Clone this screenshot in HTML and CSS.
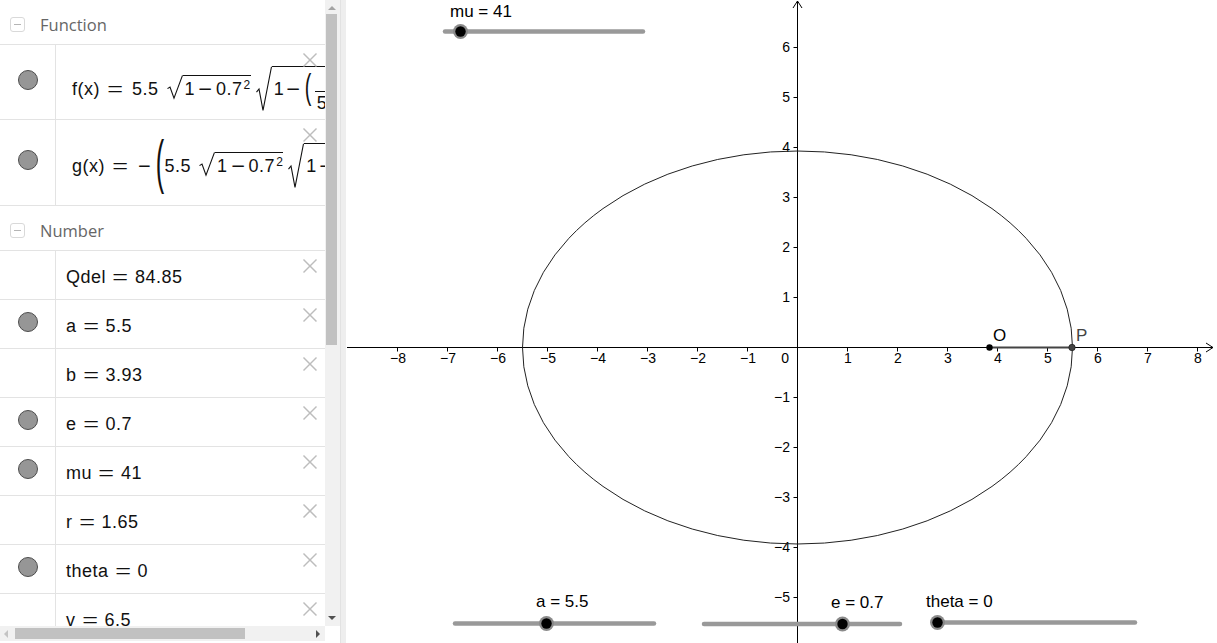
FILE: index.html
```html
<!DOCTYPE html>
<html>
<head>
<meta charset="utf-8">
<title>Ellipse</title>
<link rel="stylesheet" href="styles.css">
</head>
<body>
<div class="app">
  <aside class="algebra">
    <div class="algebra-main">
      <div class="list">
        <div class="group-head"><span class="toggle"><span class="minus"></span></span><span class="group-title">Function</span></div>

        <div class="row row-f">
          <div class="icon-col"><span class="dot"></span></div>
          <div class="cell">
            <div class="math big-math">f(x)<span class="rel">=</span>5.5<span class="sqrt s1"><svg class="rad" viewBox="0 0 16 30" preserveAspectRatio="none"><polyline points="0.5,17 3,15 7,29 15.5,0.5" vector-effect="non-scaling-stroke"/></svg><span class="rb">1<span class="bin">−</span>0.7<sup>2</sup></span></span><span class="sqrt s2"><svg class="rad" viewBox="0 0 16 30" preserveAspectRatio="none"><polyline points="0.5,17 3,15 7,29 15.5,0.5" vector-effect="non-scaling-stroke"/></svg><span class="rb">1<span class="bin">−</span><span class="paren p1">(</span><span class="frac"><span class="fn">x</span><span class="fd">5.5</span></span><span class="paren p1">)</span><sup>2</sup></span></span></div>
            <svg class="close" viewBox="0 0 16 16"><line x1="1.5" y1="1.5" x2="14.5" y2="14.5"/><line x1="14.5" y1="1.5" x2="1.5" y2="14.5"/></svg>
          </div>
        </div>

        <div class="row row-g">
          <div class="icon-col"><span class="dot"></span></div>
          <div class="cell">
            <div class="math big-math">g(x)<span class="rel">=</span><span class="neg">−</span><span class="paren p2">(</span>5.5<span class="sqrt s1"><svg class="rad" viewBox="0 0 16 30" preserveAspectRatio="none"><polyline points="0.5,17 3,15 7,29 15.5,0.5" vector-effect="non-scaling-stroke"/></svg><span class="rb">1<span class="bin">−</span>0.7<sup>2</sup></span></span><span class="sqrt s2"><svg class="rad" viewBox="0 0 16 30" preserveAspectRatio="none"><polyline points="0.5,17 3,15 7,29 15.5,0.5" vector-effect="non-scaling-stroke"/></svg><span class="rb">1<span class="bin">−</span><span class="paren p1">(</span><span class="frac"><span class="fn">x</span><span class="fd">5.5</span></span><span class="paren p1">)</span><sup>2</sup></span></span><span class="paren p2">)</span></div>
            <svg class="close" viewBox="0 0 16 16"><line x1="1.5" y1="1.5" x2="14.5" y2="14.5"/><line x1="14.5" y1="1.5" x2="1.5" y2="14.5"/></svg>
          </div>
        </div>

        <div class="group-head"><span class="toggle"><span class="minus"></span></span><span class="group-title">Number</span></div>

        <div class="row row-n">
          <div class="icon-col"></div>
          <div class="cell"><div class="math">Qdel<span class="rel">=</span>84.85</div>
            <svg class="close" viewBox="0 0 16 16"><line x1="1.5" y1="1.5" x2="14.5" y2="14.5"/><line x1="14.5" y1="1.5" x2="1.5" y2="14.5"/></svg></div>
        </div>
        <div class="row row-n">
          <div class="icon-col"><span class="dot"></span></div>
          <div class="cell"><div class="math">a<span class="rel">=</span>5.5</div>
            <svg class="close" viewBox="0 0 16 16"><line x1="1.5" y1="1.5" x2="14.5" y2="14.5"/><line x1="14.5" y1="1.5" x2="1.5" y2="14.5"/></svg></div>
        </div>
        <div class="row row-n">
          <div class="icon-col"></div>
          <div class="cell"><div class="math">b<span class="rel">=</span>3.93</div>
            <svg class="close" viewBox="0 0 16 16"><line x1="1.5" y1="1.5" x2="14.5" y2="14.5"/><line x1="14.5" y1="1.5" x2="1.5" y2="14.5"/></svg></div>
        </div>
        <div class="row row-n">
          <div class="icon-col"><span class="dot"></span></div>
          <div class="cell"><div class="math">e<span class="rel">=</span>0.7</div>
            <svg class="close" viewBox="0 0 16 16"><line x1="1.5" y1="1.5" x2="14.5" y2="14.5"/><line x1="14.5" y1="1.5" x2="1.5" y2="14.5"/></svg></div>
        </div>
        <div class="row row-n">
          <div class="icon-col"><span class="dot"></span></div>
          <div class="cell"><div class="math">mu<span class="rel">=</span>41</div>
            <svg class="close" viewBox="0 0 16 16"><line x1="1.5" y1="1.5" x2="14.5" y2="14.5"/><line x1="14.5" y1="1.5" x2="1.5" y2="14.5"/></svg></div>
        </div>
        <div class="row row-n">
          <div class="icon-col"></div>
          <div class="cell"><div class="math">r<span class="rel">=</span>1.65</div>
            <svg class="close" viewBox="0 0 16 16"><line x1="1.5" y1="1.5" x2="14.5" y2="14.5"/><line x1="14.5" y1="1.5" x2="1.5" y2="14.5"/></svg></div>
        </div>
        <div class="row row-n">
          <div class="icon-col"><span class="dot"></span></div>
          <div class="cell"><div class="math">theta<span class="rel">=</span>0</div>
            <svg class="close" viewBox="0 0 16 16"><line x1="1.5" y1="1.5" x2="14.5" y2="14.5"/><line x1="14.5" y1="1.5" x2="1.5" y2="14.5"/></svg></div>
        </div>
        <div class="row row-n">
          <div class="icon-col"></div>
          <div class="cell"><div class="math">v<span class="rel">=</span>6.5</div>
            <svg class="close" viewBox="0 0 16 16"><line x1="1.5" y1="1.5" x2="14.5" y2="14.5"/><line x1="14.5" y1="1.5" x2="1.5" y2="14.5"/></svg></div>
        </div>
      </div>
      <div class="vscroll">
        <span class="arrow-up"></span>
        <span class="vthumb"></span>
        <span class="vspace"></span>
        <span class="arrow-down"></span>
      </div>
    </div>
    <div class="algebra-bottom">
      <div class="hscroll">
        <span class="arrow-left"></span>
        <span class="hthumb"></span>
        <span class="hspace"></span>
        <span class="arrow-right"></span>
      </div>
      <div class="corner"></div>
    </div>
  </aside>
  <div class="divider"></div>
  <main class="graphics">
    <svg class="canvas" width="871" height="643" viewBox="346 0 871 643">
      <g class="axes">
        <line x1="347" y1="347.5" x2="1213" y2="347.5"/>
        <polyline points="1206,343 1213,347.5 1206,352"/>
        <line x1="797.5" y1="1" x2="797.5" y2="643"/>
        <polyline points="793,8 797.5,1 802,8"/>
        <path d="M397.5 347.5v4M447.5 347.5v4M497.5 347.5v4M547.5 347.5v4M597.5 347.5v4M647.5 347.5v4M697.5 347.5v4M747.5 347.5v4M847.5 347.5v4M897.5 347.5v4M947.5 347.5v4M997.5 347.5v4M1047.5 347.5v4M1097.5 347.5v4M1147.5 347.5v4M1197.5 347.5v4"/>
        <path d="M793.5 47.5h4M793.5 97.5h4M793.5 147.5h4M793.5 197.5h4M793.5 247.5h4M793.5 297.5h4M793.5 397.5h4M793.5 447.5h4M793.5 497.5h4M793.5 547.5h4M793.5 597.5h4"/>
      </g>
      <g class="xlabels">
        <text x="398" y="363">−8</text>
        <text x="448" y="363">−7</text>
        <text x="498" y="363">−6</text>
        <text x="548" y="363">−5</text>
        <text x="598" y="363">−4</text>
        <text x="648" y="363">−3</text>
        <text x="698" y="363">−2</text>
        <text x="748" y="363">−1</text>
        <text x="848" y="363">1</text>
        <text x="898" y="363">2</text>
        <text x="948" y="363">3</text>
        <text x="998" y="363">4</text>
        <text x="1048" y="363">5</text>
        <text x="1098" y="363">6</text>
        <text x="1148" y="363">7</text>
        <text x="1198" y="363">8</text>
      </g>
      <g class="ylabels">
        <text x="789" y="363">0</text>
        <text x="790" y="52">6</text>
        <text x="790" y="102">5</text>
        <text x="790" y="152">4</text>
        <text x="790" y="202">3</text>
        <text x="790" y="252">2</text>
        <text x="790" y="302">1</text>
        <text x="790" y="402">−1</text>
        <text x="790" y="452">−2</text>
        <text x="790" y="502">−3</text>
        <text x="790" y="552">−4</text>
        <text x="790" y="602">−5</text>
      </g>
      <ellipse class="curve" cx="797.5" cy="347.5" rx="275" ry="196.5"/>
      <line class="segment" x1="989.5" y1="347.5" x2="1072" y2="347.5"/>
      <circle class="pt-o" cx="989.5" cy="347.5" r="3.2"/>
      <circle class="pt-p" cx="1072" cy="347.5" r="3.2"/>
      <text class="lbl-o" x="993" y="341">O</text>
      <text class="lbl-p" x="1076" y="341">P</text>

      <g class="slider">
        <text x="450" y="17">mu = 41</text>
        <line x1="445" y1="31.5" x2="643" y2="31.5"/>
        <circle class="ring" cx="460.5" cy="31.5" r="7.5"/>
        <circle class="knob" cx="460.5" cy="31.5" r="5.2"/>
      </g>
      <g class="slider">
        <text x="536" y="607">a = 5.5</text>
        <line x1="455" y1="623.5" x2="654" y2="623.5"/>
        <circle class="ring" cx="546.5" cy="623.5" r="7.5"/>
        <circle class="knob" cx="546.5" cy="623.5" r="5.2"/>
      </g>
      <g class="slider">
        <text x="831" y="608">e = 0.7</text>
        <line x1="704" y1="624" x2="900" y2="624"/>
        <circle class="ring" cx="842.5" cy="624" r="7.5"/>
        <circle class="knob" cx="842.5" cy="624" r="5.2"/>
      </g>
      <g class="slider">
        <text x="926" y="607">theta = 0</text>
        <line x1="937" y1="622.5" x2="1135" y2="622.5"/>
        <circle class="ring" cx="937.5" cy="622.5" r="7.5"/>
        <circle class="knob" cx="937.5" cy="622.5" r="5.2"/>
      </g>
    </svg>
  </main>
</div>
</body>
</html>
```

FILE: styles.css
```css
* { box-sizing: border-box; }
html, body { margin: 0; padding: 0; }
body {
  width: 1217px;
  height: 643px;
  overflow: hidden;
  background: #fff;
  font-family: "Liberation Sans", Arial, sans-serif;
}
.app { display: flex; height: 643px; }

/* ---------- algebra view ---------- */
.algebra { width: 340px; display: flex; flex-direction: column; flex: none; }
.algebra-main { display: flex; height: 626px; }
.list { width: 325px; height: 626px; overflow: hidden; }

.group-head {
  height: 45px;
  display: flex;
  align-items: flex-start;
  padding: 14px 0 0 10px;
  border-bottom: 1px solid #e3e3e3;
}
.toggle {
  width: 15px; height: 15px;
  margin-top: 3px;
  border: 1px solid #d9d9d9;
  border-radius: 3px;
  display: flex; align-items: center; justify-content: center;
}
.minus { width: 7px; height: 1px; background: #b5b5b5; }
.group-title {
  margin-left: 15px;
  font-family: "Open Sans", sans-serif;
  font-size: 16.5px;
  line-height: 22px;
  color: #666;
}

.row { display: flex; border-bottom: 1px solid #e3e3e3; }
.row-f { height: 75px; }
.row-g { height: 86px; }
.row-n { height: 49px; }

.icon-col {
  width: 56px;
  flex: none;
  border-right: 1px solid #e3e3e3;
  display: flex;
  justify-content: center;
  align-items: flex-start;
}
.row-f .icon-col { padding-top: 25px; }
.row-g .icon-col { padding-top: 30px; }
.row-n .icon-col { padding-top: 12px; }
.dot {
  width: 20px; height: 20px;
  border-radius: 50%;
  background: #969696;
  border: 1px solid #4d4d4d;
}

.cell {
  flex: 1;
  position: relative;
  overflow: hidden;
  padding-left: 10px;
}
.row-n .cell { padding-top: 16px; }
.row-f .cell { padding-top: 21px; }
.row-g .cell { padding-top: 23px; }

.close {
  position: absolute;
  top: 7px; right: 7px;
  width: 16px; height: 16px;
}
.close line { stroke: #bdbdbd; stroke-width: 1.5; }

/* ---------- math ---------- */
.math {
  font-family: "Liberation Sans", Arial, sans-serif;
  font-size: 18px;
  line-height: 20px;
  letter-spacing: 0.5px;
  color: #111;
  white-space: nowrap;
}
.big-math { margin-left: 6px; }
.rel { display: inline-block; margin: 0 9px; transform: scaleX(1.5); }
.big-math .rel { margin: 0 11px 0 10px; }
.bin { display: inline-block; margin: 0 5px; transform: scaleX(1.3); }
.neg { display: inline-block; margin: 0 7px 0 2px; transform: scaleX(1.2); }
.math sup { font-size: 12px; line-height: 0; vertical-align: 6px; margin-left: 1px; }

.sqrt {
  display: inline-block;
  position: relative;
  padding-left: 16px;
  margin-left: 8px;
}
.s2 { margin-left: 5px; }
.rad {
  position: absolute;
  left: 0; top: 0;
  width: 16px; height: 100%;
  overflow: visible;
}
.rad polyline { fill: none; stroke: #111; stroke-width: 1.1; }
.rb {
  display: inline-block;
  border-top: 1px solid #111;
  padding: 3px 0 0 2px;
}
.s2 .rb { padding-top: 6px; }
.s2 .bin { margin: 0 4px; }

.paren {
  display: inline-block;
  line-height: 18px;
  transform-origin: 50% 58%;
}
.p1 { transform: scale(1.1, 1.9); margin: 0 2px; }
.p2 { transform: scale(1.4, 3.25); margin: 0 1px 0 0; }

.frac {
  display: inline-flex;
  flex-direction: column;
  align-items: stretch;
  text-align: center;
  vertical-align: 7px;
  line-height: 18px;
  padding: 0 1px;
}
.fn { border-bottom: 1px solid #111; margin-bottom: 1px; }
.fd { padding: 0 2px; margin-top: 1px; }

/* ---------- scrollbars ---------- */
.vscroll {
  width: 15px;
  background: #f1f1f1;
  display: flex;
  flex-direction: column;
  align-items: flex-start;
}
.arrow-up {
  width: 0; height: 0;
  margin: 6px 0 0 3px;
  border-left: 4px solid transparent;
  border-right: 4px solid transparent;
  border-bottom: 4px solid #a3a3a3;
}
.vthumb { width: 11px; height: 331px; margin: 4px 0 0 1px; background: #c1c1c1; }
.vspace { flex: 1; }
.arrow-down {
  width: 0; height: 0;
  margin: 0 0 6px 3px;
  border-left: 4px solid transparent;
  border-right: 4px solid transparent;
  border-top: 4px solid #505050;
}
.algebra-bottom { display: flex; height: 17px; }
.hscroll {
  width: 325px;
  height: 15px;
  background: #f1f1f1;
  display: flex;
  align-items: center;
}
.arrow-left {
  width: 0; height: 0;
  margin-left: 4px;
  border-top: 4px solid transparent;
  border-bottom: 4px solid transparent;
  border-right: 4px solid #c4c4c4;
}
.hthumb { width: 230px; height: 11px; margin-left: 7px; background: #c1c1c1; }
.hspace { flex: 1; }
.arrow-right {
  width: 0; height: 0;
  margin-right: 5px;
  border-top: 4px solid transparent;
  border-bottom: 4px solid transparent;
  border-left: 4px solid #505050;
}
.corner { flex: 1; background: #fff; }

.divider {
  width: 6px;
  flex: none;
  background: #eeeeee;
  border-left: 1px solid #e2e2e2;
}

/* ---------- graphics view ---------- */
.graphics { flex: 1; background: #fff; }
.canvas { display: block; }
.axes line, .axes polyline, .axes path { stroke: #000; stroke-width: 1; fill: none; }
.xlabels text { font-family: "Liberation Sans", Arial, sans-serif; font-size: 14px; text-anchor: middle; fill: #000; }
.ylabels text { font-family: "Liberation Sans", Arial, sans-serif; font-size: 14px; text-anchor: end; fill: #000; }
.curve { fill: none; stroke: #222; stroke-width: 1; }
.segment { stroke: #444; stroke-width: 2; }
.pt-o { fill: #000; }
.pt-p { fill: #444; stroke: #222; stroke-width: 0.8; }
.lbl-o, .lbl-p { font-family: "Liberation Sans", Arial, sans-serif; font-size: 17px; }
.lbl-o { fill: #000; }
.lbl-p { fill: #444; }
.slider text { font-family: "Liberation Sans", Arial, sans-serif; font-size: 17px; fill: #000; }
.slider line { stroke: #999; stroke-width: 4.5; stroke-linecap: round; }
.slider .ring { fill: #8a8a8a; }
.slider .knob { fill: #000; }
```
